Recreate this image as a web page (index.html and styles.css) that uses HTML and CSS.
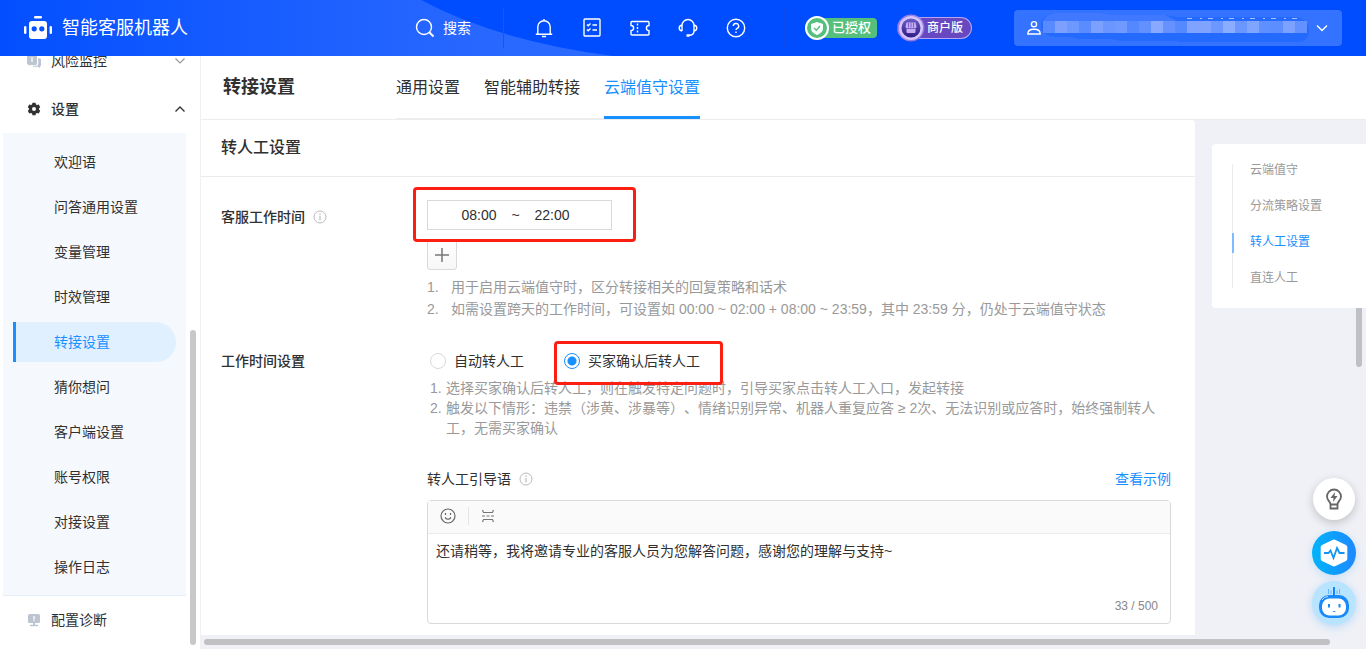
FILE: index.html
```html
<!DOCTYPE html>
<html lang="zh-CN">
<head>
<meta charset="utf-8">
<title>智能客服机器人</title>
<link rel="stylesheet" href="styles.css">
</head>
<body>
<div class="app">
  <header class="topbar">
    <svg class="topbar-wave" width="613" height="56" viewBox="0 0 613 56" aria-hidden="true">
      <defs><linearGradient id="wave" x1="0" x2="1"><stop offset="0" stop-color="#034fff"/><stop offset=".75" stop-color="#2767ff"/><stop offset="1" stop-color="#2c6bff"/></linearGradient></defs>
      <path d="M0 0H421Q498 41 613 56H0Z" fill="url(#wave)"/>
    </svg>
    <div class="brand">
      <svg width="28" height="24" viewBox="0 0 28 24" fill="#fff" aria-hidden="true">
        <rect x="10" y="0" width="8" height="2.600" rx="1.300"/>
        <rect x="0" y="10" width="2.400" height="8" rx="1.200"/><rect x="25.600" y="10" width="2.400" height="8" rx="1.200"/>
        <path fill-rule="evenodd" d="M8 5h12a3 3 0 0 1 3 3v12a3 3 0 0 1-3 3H8a3 3 0 0 1-3-3V8a3 3 0 0 1 3-3Zm2.200 5.200a2.600 2.600 0 1 0 0 5.200a2.600 2.600 0 0 0 0-5.200Zm7.600 0a2.600 2.600 0 1 0 0 5.200a2.600 2.600 0 0 0 0-5.200Z"/>
      </svg>
      <span>智能客服机器人</span>
    </div>
    <button class="search" type="button">
      <svg width="20" height="20" viewBox="0 0 20 20" class="line" aria-hidden="true"><circle cx="9" cy="9" r="7.500"/><path d="M14.500 14.500L18.500 18.500" stroke-width="2"/></svg>
      <span>搜索</span>
    </button>
    <nav class="tools">
      <button type="button" aria-label="通知"><svg width="20" height="20" viewBox="0 0 20 20" class="line"><path d="M3.800 16V9a6.200 6.200 0 0 1 12.400 0V16M1.800 16.200H18.200M8 18.500H12M10 1V2.500"/></svg></button>
      <button type="button" aria-label="任务"><svg width="20" height="20" viewBox="0 0 20 20" class="line"><rect x="2" y="1" width="16" height="17" rx="1"/><path d="M5 6.500l1.200 1.200 2.300-2.200M10.500 7H15M5 11.500l1.200 1.200 2.300-2.200M10.500 12H15"/></svg></button>
      <button type="button" aria-label="工单"><svg width="20" height="20" viewBox="0 0 20 20" class="line"><path d="M2 3.500H18Q19 3.500 19 4.500V7.500a2.600 2.600 0 0 0 0 5.200V16Q19 17 18 17H2Q1 17 1 16V12.700a2.600 2.600 0 0 0 0-5.200V4.500Q1 3.500 2 3.500Z"/><path d="M7.500 5.500V16" stroke-dasharray="2 1.500"/></svg></button>
      <button type="button" aria-label="客服"><svg width="20" height="20" viewBox="0 0 20 20" class="line"><path d="M4 13V7.500a6 6 0 0 1 12 0V13C16 15.500 14 17.300 11 17.300M4 7C.3 7.500.3 12.500 4 13M16 7c3.700.5 3.700 5.500 0 6"/><path d="M8.500 17.500h3" stroke-width="2.500"/></svg></button>
      <button type="button" aria-label="帮助"><svg width="20" height="20" viewBox="0 0 20 20" class="line"><circle cx="10" cy="10" r="8.700"/><path d="M7.300 8a2.700 2.500 0 1 1 3.800 2.300Q10 10.800 10 12M10 13.500V15"/></svg></button>
    </nav>
    <div class="badges">
      <span class="badge badge-auth">
        <svg width="24" height="24" viewBox="0 0 24 24" aria-hidden="true"><circle cx="12" cy="12" r="11" fill="#55c07c" stroke="#fff" stroke-width="2"/><path d="M12 6l6 2v4.500c0 3-2.500 5-6 6.500c-3.500-1.500-6-3.500-6-6.500V8Z" fill="#fff"/><path d="M9 12l2.300 2.200L15 10" fill="none" stroke="#55c07c" stroke-width="1.500"/></svg>
        <span>已授权</span>
      </span>
      <span class="badge badge-shop">
        <svg width="28" height="28" viewBox="0 0 28 28" aria-hidden="true"><defs><linearGradient id="ring" x2="1" y2="1"><stop stop-color="#8f76e6"/><stop offset=".5" stop-color="#a48cec"/><stop offset="1" stop-color="#7b5fd6"/></linearGradient><linearGradient id="disc" x2="0" y2="1"><stop stop-color="#6d5cc4"/><stop offset="1" stop-color="#2f1b86"/></linearGradient></defs><circle cx="14" cy="14" r="13.500" fill="url(#ring)"/><circle cx="14" cy="14" r="12" fill="#d3c4fa"/><circle cx="14" cy="14" r="9.500" fill="url(#disc)"/><path d="M9.500 8.500H18.500L19.500 12.500Q19.500 14 18.500 14V18Q18.500 19 17.500 19H10.500Q9.500 19 9.500 18V14Q8.500 14 8.500 12.500Z" fill="#c5adf5"/><path d="M11.500 9V13.500M14 9V13.500M16.500 9V13.500M9 14.500H19" stroke="#6b4fc0" stroke-width=".8"/></svg>
        <span>商户版</span>
      </span>
    </div>
    <button class="account" type="button" aria-label="账号">
      <svg width="14" height="16" viewBox="0 0 14 16" class="line" aria-hidden="true"><circle cx="7" cy="4.200" r="2.600"/><path d="M.8 14C.8 11 3 9.300 7 9.300s6.200 1.700 6.200 4.700Z"/></svg>
      <svg class="mask" width="270" height="30" viewBox="0 0 270 30" aria-hidden="true">
        <path d="M14 0H60L70 2H124L136 4H256Q268 7 268 18Q268 28 258 29H138L136 28H80L70 26H38L30 24H14Q0 22 0 12Q0 2 14 0Z" fill="#256aff"/>
        <path d="M14 0H60L70 2H124L136 8H2Q4 2 14 0Z" fill="#4079ff"/>
        <g shape-rendering="crispEdges">
          <rect x="2" y="8" width="12" height="12" fill="#588bff"/><rect x="14" y="8" width="12" height="12" fill="#7da0ff"/><rect x="26" y="8" width="12" height="12" fill="#6d98ff"/><rect x="38" y="8" width="12" height="12" fill="#5a8cff"/><rect x="50" y="8" width="12" height="12" fill="#7ca0ff"/><rect x="62" y="8" width="12" height="12" fill="#6b95ff"/><rect x="74" y="8" width="12" height="12" fill="#709aff"/><rect x="86" y="8" width="12" height="12" fill="#5388ff"/><rect x="98" y="8" width="12" height="12" fill="#6291ff"/><rect x="110" y="8" width="12" height="12" fill="#88a9ff"/><rect x="122" y="8" width="12" height="12" fill="#6692ff"/><rect x="134" y="8" width="12" height="12" fill="#5489ff"/><rect x="146" y="8" width="24" height="12" fill="#7fa3ff"/><rect x="170" y="8" width="12" height="12" fill="#6b97ff"/><rect x="182" y="8" width="12" height="12" fill="#8badff"/><rect x="194" y="8" width="12" height="12" fill="#6a96ff"/><rect x="206" y="8" width="12" height="12" fill="#80a5ff"/><rect x="218" y="8" width="12" height="12" fill="#5f90ff"/><rect x="230" y="8" width="12" height="12" fill="#5d8eff"/><rect x="242" y="8" width="12" height="12" fill="#7da1ff"/><rect x="254" y="8" width="12" height="12" fill="#6391ff"/>
        </g>
        <path d="M146 5.500H262" stroke="#a9c2ff" stroke-dasharray="5 8 2 6" stroke-width="1"/>
      </svg>
      <svg width="12" height="8" viewBox="0 0 12 8" class="line" aria-hidden="true"><path d="M1 1.500L6 6.500L11 1.500"/></svg>
    </button>
  </header>

  <div class="body">
    <aside class="sidebar">
      <ul class="menu">
        <li><a class="group" href="#">
          <svg width="14" height="14" viewBox="0 0 14 14" fill="#bcc5d1" aria-hidden="true"><path d="M2 0H8.500Q10 0 10 1.500V9Q10 11 8.500 11H3L1.500 12V10.500Q0 10.500 0 9V2Q0 0 2 0Z"/><path d="M11.200 4Q14 4 14 6V11.500Q14 12.500 13 12.500V14L11 12.700H6V11.800H9.500Q11.200 11.800 11.200 10Z"/><path d="M5 3V8" stroke="#fff" stroke-width="1.200"/></svg>
          <span>风险监控</span>
          <svg class="chev" width="10" height="6" viewBox="0 0 10 6"><path d="M.5.5L5 5L9.500.5" fill="none" stroke="#999" stroke-width="1.200"/></svg>
        </a></li>
        <li><a class="group group-open" href="#">
          <svg width="14" height="14" viewBox="0 0 14 14" aria-hidden="true"><path fill="#333" fill-rule="evenodd" d="M5.500.8H8.500L9 2.600L10 3.100L11.800 2.600L13.200 5.200L12 6.500V7.500L13.200 8.800L11.800 11.400L10 10.900L9 11.400L8.500 13.200H5.500L5 11.400L4 10.900L2.200 11.400L.8 8.800L2 7.500V6.500L.8 5.200L2.200 2.600L4 3.100L5 2.600ZM7 5A2 2 0 1 0 7 9A2 2 0 1 0 7 5Z"/></svg>
          <span>设置</span>
          <svg class="chev" width="10" height="6" viewBox="0 0 10 6"><path d="M.5 5.500L5 1L9.500 5.500" fill="none" stroke="#333" stroke-width="1.400"/></svg>
        </a>
          <ul class="submenu">
            <li><a href="#">欢迎语</a></li>
            <li><a href="#">问答通用设置</a></li>
            <li><a href="#">变量管理</a></li>
            <li><a href="#">时效管理</a></li>
            <li><a class="current" href="#">转接设置</a></li>
            <li><a href="#">猜你想问</a></li>
            <li><a href="#">客户端设置</a></li>
            <li><a href="#">账号权限</a></li>
            <li><a href="#">对接设置</a></li>
            <li><a href="#">操作日志</a></li>
          </ul>
        </li>
        <li><a class="group" href="#">
          <svg width="14" height="14" viewBox="0 0 14 14" aria-hidden="true"><rect x="1" y="1" width="12" height="9" rx="1.500" fill="#bcc5d1"/><path d="M3 12.500H11" stroke="#bcc5d1" stroke-width="1.500"/><path d="M6 10H8V12H6Z" fill="#bcc5d1"/><path d="M7 3V6.500M7 7.300V8.300" stroke="#fff" stroke-width="1.300"/></svg>
          <span>配置诊断</span>
        </a></li>
      </ul>
      <div class="thumb thumb-side"></div>
    </aside>

    <main class="main">
      <div class="page-head">
        <h1>转接设置</h1>
        <nav class="tabs">
          <a href="#">通用设置</a>
          <a href="#">智能辅助转接</a>
          <a class="current" href="#">云端值守设置</a>
        </nav>
      </div>
      <div class="content">
        <section class="panel">
          <h2>转人工设置</h2>
          <div class="form">
            <div class="row">
              <div class="row-label row-label-tall">客服工作时间
                <svg class="info" width="14" height="14" viewBox="0 0 14 14"><circle cx="7" cy="7" r="6" fill="none" stroke="#bbb"/><path d="M7 6V10.500M7 3.500V5" stroke="#bbb" stroke-width="1.200"/></svg>
              </div>
              <div class="row-body">
                <div class="time">
                  <input type="text" value="08:00" aria-label="开始时间"><span>~</span><input type="text" value="22:00" aria-label="结束时间">
                  <i class="mark mark-time"></i>
                </div>
                <button class="add" type="button" aria-label="添加时间"><svg width="14" height="14" viewBox="0 0 14 14"><path d="M7 0V14M0 7H14" stroke="#777" stroke-width="1.500"/></svg></button>
                <ol class="notes">
                  <li>用于启用云端值守时，区分转接相关的回复策略和话术</li>
                  <li>如需设置跨天的工作时间，可设置如 00:00 ~ 02:00 + 08:00 ~ 23:59，其中 23:59 分，仍处于云端值守状态</li>
                </ol>
              </div>
            </div>
            <div class="row">
              <div class="row-label">工作时间设置</div>
              <div class="row-body">
                <div class="radios">
                  <label><input type="radio" name="mode"><span>自动转人工</span></label>
                  <label><input type="radio" name="mode" checked><span>买家确认后转人工</span><i class="mark mark-radio"></i></label>
                </div>
                <ol class="notes notes-tight">
                  <li>选择买家确认后转人工，则在触发特定问题时，引导买家点击转人工入口，发起转接</li>
                  <li>触发以下情形：违禁（涉黄、涉暴等）、情绪识别异常、机器人重复应答 ≥ 2次、无法识别或应答时，始终强制转人工，无需买家确认</li>
                </ol>
                <div class="guide">
                  <label for="guide">转人工引导语</label>
                  <svg class="info" width="14" height="14" viewBox="0 0 14 14"><circle cx="7" cy="7" r="6" fill="none" stroke="#bbb"/><path d="M7 6V10.500M7 3.500V5" stroke="#bbb" stroke-width="1.200"/></svg>
                  <a href="#">查看示例</a>
                </div>
                <div class="editor">
                  <div class="editor-bar">
                    <button type="button" aria-label="表情"><svg width="16" height="16" viewBox="0 0 16 16" fill="none" stroke="#666" stroke-width="1.200"><circle cx="8" cy="8" r="7"/><path d="M5 9.500Q8 13 11 9.500M5.500 5V7M10.500 5V7"/></svg></button>
                    <button type="button" aria-label="分隔"><svg width="16" height="16" viewBox="0 0 16 16" fill="none" stroke="#777" stroke-width="1.200"><path d="M2.500 2L3.500 4.500H12.500L13.500 2M2.500 14L3.500 11.500H12.500L13.500 14"/><path d="M2 8H14" stroke-dasharray="3 1.500"/></svg></button>
                  </div>
                  <textarea id="guide">还请稍等，我将邀请专业的客服人员为您解答问题，感谢您的理解与支持~</textarea>
                  <div class="count">33 / 500</div>
                </div>
              </div>
            </div>
          </div>
        </section>
        <div class="rail">
          <nav class="anchors">
            <ul>
              <li><a href="#">云端值守</a></li>
              <li><a href="#">分流策略设置</a></li>
              <li><a class="current" href="#">转人工设置</a></li>
              <li><a href="#">直连人工</a></li>
            </ul>
          </nav>
          <div class="thumb thumb-main"></div>
        </div>
      </div>
      <div class="hscroll"><div class="hscroll-thumb"></div></div>
    </main>
  </div>

  <div class="floats">
    <button class="tip" type="button" aria-label="建议"><svg width="18" height="22" viewBox="0 0 18 22"><path d="M5.500 16.500C5.500 13.500 2 12.500 2 8.500a7 7 0 0 1 14 0C16 12.500 12.500 13.500 12.500 16.500ZM5.500 16.500V20.500H12.500V16.500" fill="none" stroke="#666" stroke-width="1.800"/><path d="M10 4L5.500 10H8.500L8 14L12.500 8H9.500Z" fill="#666"/></svg></button>
    <button class="pulse" type="button" aria-label="诊断"><svg width="28" height="28" viewBox="0 0 28 28"><path d="M12.500 1Q14 .2 15.500 1L26 6Q27.300 7 27.300 8V20Q27.300 21 26 22L15.500 27Q14 27.800 12.500 27L2 22Q.7 21 .7 20V8Q.7 7 2 6Z" fill="#fff"/><path d="M4 14H8.500L10.500 11.500L13.500 19L17 9L19.500 14H24.500" fill="none" stroke="#1394f5" stroke-width="1.800"/></svg></button>
    <button class="bot" type="button" aria-label="智能助手"><svg width="32" height="32" viewBox="0 0 32 32"><path d="M10.500 2V7M13 3.500V7M19 3.500V7M21.500 2V7" stroke="#69b5fa"/><path d="M16 0V9" stroke="#1684f5" stroke-width="2"/><rect x="1" y="8" width="30" height="23" rx="10" fill="#1989fa"/><rect x="4" y="11.500" width="24" height="17" rx="7.500" fill="#fff"/><path d="M11 17V20.500M21.500 17V20.500" stroke="#1989fa" stroke-width="2"/><path d="M14.500 24Q16.200 26 18 24Z" fill="#1989fa"/><path d="M4 13Q6 9.500 10 9.500" stroke="#bfe2ff" fill="none"/></svg></button>
  </div>
</div>
</body>
</html>
```

FILE: styles.css
```css
* { box-sizing: border-box; }
body {
  margin: 0;
  font: 14px/22px "Liberation Sans", "Noto Sans CJK SC", sans-serif;
  color: #303030;
  text-spacing-trim: space-all;
}
ul, ol { list-style: none; margin: 0; padding: 0; }
a { color: inherit; text-decoration: none; }
button { border: 0; padding: 0; background: none; font: inherit; color: inherit; cursor: pointer; }
svg { display: block; flex: none; }
.line { fill: none; stroke: #fff; stroke-width: 1.4; }

.app { position: relative; display: flex; flex-direction: column; height: 100vh; overflow: hidden; }

/* Top bar */
.topbar {
  position: relative;
  z-index: 2;
  display: flex;
  flex: none;
  align-items: center;
  height: 56px;
  padding: 0 24px;
  background: #004dff;
  color: #fff;
}
.topbar-wave { position: absolute; left: 0; top: 0; z-index: -1; }
.brand { display: flex; align-items: center; gap: 10px; margin-right: auto; font-size: 18px; }
.search { display: flex; align-items: center; gap: 8px; padding-right: 32px; }
.tools { display: flex; gap: 28px; padding: 10px 38px 10px 30px; border-left: 1px solid #1a55f0; border-right: 1px solid #0a4af0; }
.badges { display: flex; align-items: center; gap: 20px; padding: 6px 21px 6px 20px; border-right: 1px solid #0a4af0; }
.badge { display: flex; align-items: center; height: 20px; color: #fff; font-weight: 500; line-height: 20px; }
.badge-auth { gap: 3px; padding-right: 6px; border-radius: 10px 4px 4px 10px; background: #55c07c; font-size: 13px; }
.badge-shop { gap: 2px; height: 22px; padding-right: 8px; border: 1px solid #b9a3f5; border-left: 0; border-radius: 12px; background: #6748c0; font-size: 12px; }
.account {
  display: flex;
  align-items: center;
  width: 328px;
  height: 36px;
  margin-left: 20px;
  padding: 0 14px 0 13px;
  border-radius: 4px;
  background: #3373ff;
}
.mask { margin-right: auto; }

/* Side menu */
.body { display: flex; flex: 1; min-height: 0; }
.sidebar { position: relative; z-index: 1; flex: none; width: 201px; overflow: hidden; border-right: 1px solid #f0f0f0; background: #fff; }
.menu { margin: -19px 14px 0 3px; }
.group { display: flex; align-items: center; gap: 10px; height: 48px; padding: 0 1px 0 24px; }
.group-open { font-weight: 500; }
.chev { margin-left: auto; }
.submenu { display: grid; gap: 5px; padding: 9px 10px 8px 10px; border-bottom: 1px solid #e3effb; background: #f5f9fd; }
.submenu a { display: block; padding-left: 38px; border-left: 3px solid transparent; line-height: 40px; }
.submenu .current { border-color: #1890ff; border-radius: 0 20px 20px 0; background: #e1f0ff; color: #1890ff; }
.thumb { position: absolute; width: 6px; border-radius: 3px; background: #c8c8c8; }
.thumb-side { right: 4px; bottom: 4px; height: 315px; }

/* Page head */
.main { display: flex; flex: 1; flex-direction: column; min-width: 0; background: #eff1f6; }
.page-head { display: flex; flex: none; height: 64px; padding-left: 22px; border-bottom: 1px solid #ededed; background: #fff; }
h1 { flex: none; width: 173px; margin: 0; font-size: 18px; line-height: 62px; }
.tabs { display: flex; gap: 24px; border-bottom: 1px solid #ededed; font-size: 16px; }
.tabs a { height: 63px; line-height: 63px; }
.tabs .current { border-bottom: 3px solid #1890ff; color: #1890ff; }

/* Settings form */
.content { display: flex; flex: 1; min-height: 0; }
.panel { flex: 1; min-width: 0; border-radius: 0 4px 0 0; background: #fff; }
h2 { margin: 0; padding-left: 20px; border-bottom: 1px solid #ebebeb; font-size: 16px; font-weight: 500; line-height: 56px; }
.form { display: grid; gap: 30px; padding: 23px 24px 11px 20px; }
.row { display: flex; }
.row-label { display: flex; flex: none; align-items: center; align-self: flex-start; gap: 8px; width: 206px; font-weight: 500; }
.row-label-tall { height: 34px; }
.row-body { flex: 1; min-width: 0; }
.time { position: relative; display: flex; align-items: center; justify-content: center; width: 185px; height: 30px; padding-right: 8px; border: 1px solid #d9d9d9; }
.time input { width: 55px; padding: 0; border: 0; background: none; font: inherit; color: inherit; text-align: center; }
.time span { width: 18px; text-align: center; }
.add {
  display: flex;
  align-items: center;
  justify-content: center;
  width: 30px;
  height: 30px;
  margin: 10px 0 6px;
  border: 1px solid #d9d9d9;
  border-radius: 3px;
  background: linear-gradient(#fff, #f7f7f7);
}
.notes { counter-reset: note; color: #999; }
.notes li { display: flex; counter-increment: note; }
.notes li::before { content: counter(note) "."; flex: none; width: 24px; }
.notes-tight { margin-top: 6px; padding-left: 3px; line-height: 20px; }
.notes-tight li::before { width: 16px; }
.radios { display: flex; gap: 40px; padding-left: 3px; }
.radios label { position: relative; display: flex; align-items: center; gap: 8px; }
.radios input { appearance: none; width: 16px; height: 16px; margin: 0; border: 1px solid #d9d9d9; border-radius: 50%; }
.radios input:checked { border-color: #1890ff; background: radial-gradient(circle, #1890ff 4px, #fff 5px); }
.mark { position: absolute; border: 3px solid #fb1f13; border-radius: 4px; pointer-events: none; }
.mark-time { inset: -14px -25px -13px -15px; }
.mark-radio { inset: -9px -23px -13px -10px; }
.guide { display: flex; align-items: center; gap: 8px; margin-top: 30px; }
.guide a { margin-left: auto; color: #1890ff; }
.editor { margin-top: 10px; border: 1px solid #d9d9d9; border-radius: 4px; }
.editor-bar { display: flex; align-items: center; height: 33px; padding-bottom: 2px; border-bottom: 1px solid #ebebeb; background: #fafafa; }
.editor-bar button { padding: 1px 12px; }
.editor-bar button + button { padding-left: 11px; border-left: 1px solid #e5e5e5; }
.editor textarea { display: block; width: 100%; height: 60px; padding: 7px 8px; border: 0; outline: 0; resize: none; background: none; font: inherit; line-height: 20px; color: inherit; }
.count { height: 29px; padding-right: 12px; color: #888; font-size: 12px; line-height: 24px; text-align: right; }

/* Anchor rail */
.rail { position: relative; flex: none; width: 171px; padding: 24px 0 0 17px; }
.anchors { position: relative; z-index: 1; padding: 20px 0 20px 20px; border-radius: 4px 0 0 4px; background: #fff; font-size: 12px; }
.anchors ul { display: grid; gap: 24px; padding-bottom: 4px; border-left: 1px solid #ebebeb; color: #999; line-height: 12px; }
.anchors a { position: relative; display: block; padding-left: 17px; }
.anchors .current { color: #1890ff; }
.anchors .current::before { content: ""; position: absolute; left: -1px; top: -3px; width: 2px; height: 20px; background: #7dbcff; }
.thumb-main { right: 4px; top: 140px; height: 107px; background: #bfc0c3; }
.hscroll { flex: none; padding: 4px 36px 4px 3px; }
.hscroll-thumb { height: 6px; border-radius: 3px; background: #c1c1c3; }

/* Floating helpers */
.floats { position: absolute; right: 10px; bottom: 24px; z-index: 3; display: flex; flex-direction: column; align-items: center; gap: 6px; }
.floats button { display: flex; align-items: center; justify-content: center; width: 44px; height: 44px; border-radius: 50%; }
.floats .tip { width: 42px; height: 42px; margin-bottom: 5px; background: #fff; box-shadow: 0 3px 10px rgba(0, 0, 0, .2); }
.floats .pulse { background: linear-gradient(90deg, #00b4fa, #1e88ff); box-shadow: 0 2px 8px rgba(24, 144, 255, .2); }
.floats .bot { background: #b8e4ff; box-shadow: 0 2px 8px rgba(24, 144, 255, .25); }
```
